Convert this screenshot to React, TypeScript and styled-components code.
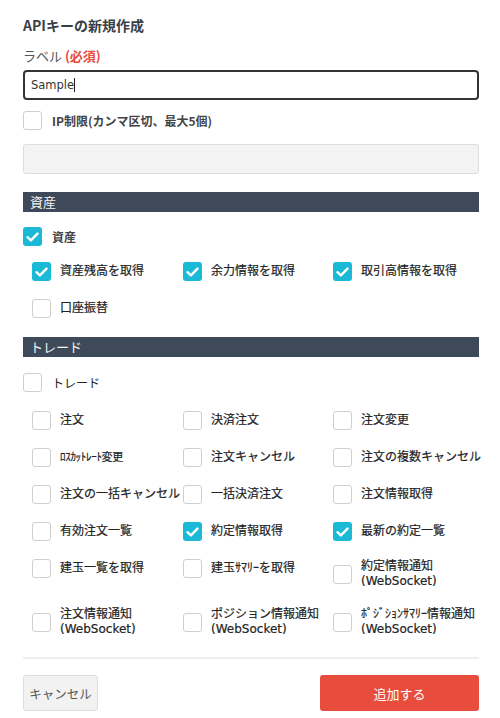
import styled, { createGlobalStyle } from "styled-components";

const GlobalStyle = createGlobalStyle`
  body {
    margin: 0;
    background: #fff;
    font-family: "Noto Sans CJK JP", "Noto Sans", sans-serif;
    color: #333;
  }
`;

type Option = { label: string; checked?: boolean; small?: boolean };

const ASSET_OPTIONS: Option[] = [
  { label: "資産残高を取得", checked: true },
  { label: "余力情報を取得", checked: true },
  { label: "取引高情報を取得", checked: true },
  { label: "口座振替" },
];

const TRADE_OPTIONS: Option[] = [
  { label: "注文" },
  { label: "決済注文" },
  { label: "注文変更" },
  { label: "ﾛｽｶｯﾄﾚｰﾄ変更", small: true },
  { label: "注文キャンセル" },
  { label: "注文の複数キャンセル" },
  { label: "注文の一括キャンセル" },
  { label: "一括決済注文" },
  { label: "注文情報取得" },
  { label: "有効注文一覧" },
  { label: "約定情報取得", checked: true },
  { label: "最新の約定一覧", checked: true },
  { label: "建玉一覧を取得" },
  { label: "建玉ｻﾏﾘｰを取得" },
  { label: "約定情報通知\n(WebSocket)" },
  { label: "注文情報通知\n(WebSocket)" },
  { label: "ポジション情報通知\n(WebSocket)" },
  { label: "ﾎﾟｼﾞｼｮﾝｻﾏﾘｰ情報通知\n(WebSocket)" },
];

const Check = ({ checked }: { checked?: boolean }) => (
  <Box $checked={checked}>
    {checked && (
      <svg width="13" height="10" viewBox="0 0 13 10">
        <path
          d="M1.5 5.2 L4.9 8.4 L11.5 1.6"
          fill="none"
          stroke="#fff"
          strokeWidth="2.4"
          strokeLinecap="round"
          strokeLinejoin="round"
        />
      </svg>
    )}
  </Box>
);

const OptionItem = ({ opt }: { opt: Option }) => (
  <Item>
    <Check checked={opt.checked} />
    <ItemText $small={opt.small}>{opt.label}</ItemText>
  </Item>
);

const App = () => {
  return (
    <Page>
      <GlobalStyle />
      <Title>APIキーの新規作成</Title>
      <Label>
        ラベル <Required>(必須)</Required>
      </Label>
      <TextInput>
        Sample<Caret />
      </TextInput>
      <TopCheck $mt={11}>
        <Check />
        <TopText>IP制限(カンマ区切、最大5個)</TopText>
      </TopCheck>
      <GrayInput />

      <SectionHeader>資産</SectionHeader>
      <TopCheck $mt={15}>
        <Check checked />
        <TopText>資産</TopText>
      </TopCheck>
      <OptionGrid $mt={16}>
        {ASSET_OPTIONS.map((o) => (
          <OptionItem key={o.label} opt={o} />
        ))}
      </OptionGrid>

      <SectionHeader $mt={19}>トレード</SectionHeader>
      <TopCheck $mt={16}>
        <Check />
        <TopText $light>トレード</TopText>
      </TopCheck>
      <OptionGrid $mt={19}>
        {TRADE_OPTIONS.map((o) => (
          <OptionItem key={o.label} opt={o} />
        ))}
      </OptionGrid>

      <Divider />
      <Footer>
        <CancelButton>キャンセル</CancelButton>
        <SubmitButton>追加する</SubmitButton>
      </Footer>
    </Page>
  );
};
export default App;

const Page = styled.div`
  width: 456px;
  padding: 15px 21px 0 23px;
`;

const Title = styled.h1`
  margin: 0;
  font-size: 14px;
  line-height: 20px;
  font-weight: bold;
  color: #3a3f47;
`;

const Label = styled.div`
  margin-top: 12px;
  font-size: 13px;
  line-height: 18px;
  color: #555;
`;

const Required = styled.span`
  color: #e74c3c;
  font-weight: bold;
`;

const TextInput = styled.div`
  margin-top: 5px;
  height: 30px;
  box-sizing: border-box;
  border: 2px solid #333;
  border-radius: 4px;
  padding: 0 6px;
  display: flex;
  align-items: center;
  font-family: "DejaVu Sans", "Noto Sans CJK JP", sans-serif;
  font-size: 11.5px;
  color: #333;
`;

const Caret = styled.span`
  display: inline-block;
  width: 1px;
  height: 14px;
  background: #222;
`;

const TopCheck = styled.div<{ $mt?: number }>`
  margin-top: ${(p) => p.$mt ?? 0}px;
  display: flex;
  align-items: center;
  gap: 10px;
  height: 19px;
`;

const TopText = styled.span<{ $light?: boolean }>`
  font-size: 12px;
  font-weight: ${(p) => (p.$light ? "normal" : "bold")};
  color: ${(p) => (p.$light ? "#222" : "#444")};
`;

const GrayInput = styled.div`
  margin-top: 14px;
  height: 30px;
  box-sizing: border-box;
  background: #f3f3f3;
  border: 1px solid #ddd;
  border-radius: 3px;
`;

const SectionHeader = styled.div<{ $mt?: number }>`
  margin-top: ${(p) => p.$mt ?? 18}px;
  height: 20px;
  background: #3e4a59;
  color: #f4f4f4;
  font-size: 13px;
  line-height: 20px;
  padding-left: 7px;
`;

const OptionGrid = styled.div<{ $mt: number }>`
  margin-top: ${(p) => p.$mt}px;
  padding-left: 9px;
  display: grid;
  grid-template-columns: 151px 150px 1fr;
  row-gap: 18px;
  align-items: start;
`;

const Item = styled.div`
  display: flex;
  align-items: center;
  gap: 9px;
  min-height: 19px;
`;

const ItemText = styled.span<{ $small?: boolean }>`
  white-space: pre;
  font-family: "DejaVu Sans", "Noto Sans CJK JP", sans-serif;
  font-size: ${(p) => (p.$small ? 11 : 12)}px;
  line-height: 15px;
  color: #222;
  -webkit-text-stroke: 0.2px #222;
  letter-spacing: ${(p) => (p.$small ? "-0.3px" : "0")};
`;

const Box = styled.span<{ $checked?: boolean }>`
  flex: none;
  width: 19px;
  height: 19px;
  box-sizing: border-box;
  border-radius: 3px;
  border: ${(p) => (p.$checked ? "none" : "1.5px solid #cfcfcf")};
  background: ${(p) => (p.$checked ? "#1ab9d6" : "#fff")};
  display: flex;
  align-items: center;
  justify-content: center;
`;

const Divider = styled.div`
  margin-top: 20px;
  height: 2px;
  background: #eee;
`;

const Footer = styled.div`
  margin-top: 16px;
  display: flex;
  justify-content: space-between;
`;

const CancelButton = styled.button`
  width: 75px;
  height: 36px;
  background: #f2f2f2;
  border: 1px solid #ddd;
  border-radius: 3px;
  color: #555;
  font-family: inherit;
  font-size: 12.5px;
  padding: 0;
`;

const SubmitButton = styled.button`
  width: 159px;
  height: 36px;
  background: #e74c3c;
  border: none;
  border-radius: 3px;
  color: #fff;
  font-family: inherit;
  font-size: 13px;
  padding: 0;
`;
